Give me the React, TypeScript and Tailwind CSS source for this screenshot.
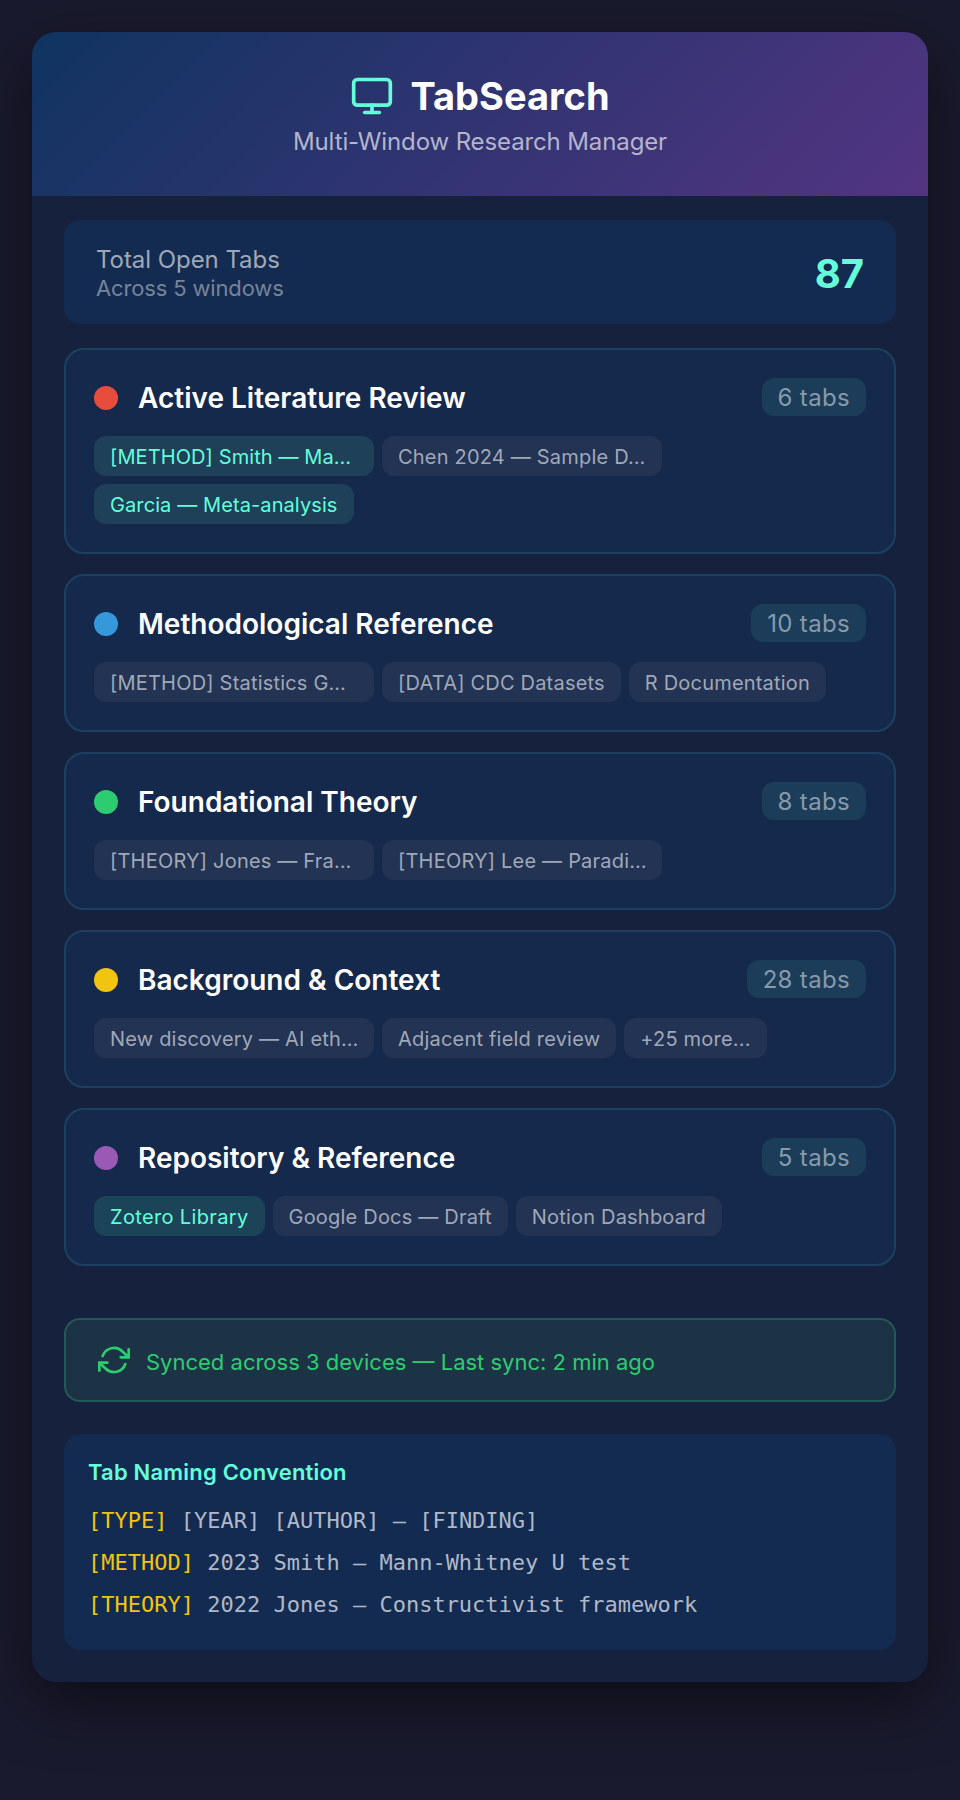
import { Monitor } from "lucide-react";

const sans = "font-['Inter','Noto_Sans',sans-serif]";

type Chip = { label: string; on?: boolean; repo?: boolean; full?: boolean };
type Group = { color: string; title: string; count: string; chips: Chip[] };

const groups: Group[] = [
  {
    color: "bg-[#e74c3c]",
    title: "Active Literature Review",
    count: "6 tabs",
    chips: [
      { label: "[METHOD] Smith — Ma…", on: true, full: true },
      { label: "Chen 2024 — Sample D…", full: true },
      { label: "Garcia — Meta-analysis", on: true },
    ],
  },
  {
    color: "bg-[#3498db]",
    title: "Methodological Reference",
    count: "10 tabs",
    chips: [
      { label: "[METHOD] Statistics G…", full: true },
      { label: "[DATA] CDC Datasets" },
      { label: "R Documentation" },
    ],
  },
  {
    color: "bg-[#2ecc71]",
    title: "Foundational Theory",
    count: "8 tabs",
    chips: [
      { label: "[THEORY] Jones — Fra…", full: true },
      { label: "[THEORY] Lee — Paradi…", full: true },
    ],
  },
  {
    color: "bg-[#f1c40f]",
    title: "Background & Context",
    count: "28 tabs",
    chips: [
      { label: "New discovery — AI eth…", full: true },
      { label: "Adjacent field review" },
      { label: "+25 more..." },
    ],
  },
  {
    color: "bg-[#9b59b6]",
    title: "Repository & Reference",
    count: "5 tabs",
    chips: [
      { label: "Zotero Library", on: true, repo: true },
      { label: "Google Docs — Draft" },
      { label: "Notion Dashboard" },
    ],
  },
];

function TabChip({ chip }: { chip: Chip }) {
  const tone = chip.repo
    ? "bg-[#1c4459] text-[#64ffda] tracking-[0.35px]"
    : chip.on
      ? "bg-[#1e4059] text-[#64ffda] tracking-[0.1px]"
      : "bg-[#233354] text-[#a0a8b8] tracking-[0.2px]";
  return (
    <div
      className={`h-10 whitespace-nowrap rounded-xl px-4 text-[20px] leading-[42px] ${chip.full ? "w-[280px]" : ""} ${tone}`}
    >
      {chip.label}
    </div>
  );
}

function SyncIcon() {
  return (
    <svg
      viewBox="0 0 24 24"
      fill="none"
      stroke="currentColor"
      strokeWidth={2}
      strokeLinecap="round"
      strokeLinejoin="round"
      className="h-8 w-8 shrink-0"
    >
      <polyline points="23 4 23 10 17 10" />
      <polyline points="1 20 1 14 7 14" />
      <path d="M3.51 9a9 9 0 0 1 14.85-3.36L23 10M1 14l4.64 4.36A9 9 0 0 0 20.49 15" />
    </svg>
  );
}

export default function App() {
  return (
    <div className={`min-h-[1800px] bg-[#1a1a2e] p-8 ${sans}`}>
      <div className="overflow-hidden rounded-3xl bg-[#16213e] shadow-[0_20px_60px_rgba(0,0,0,0.5)]">
        <header className="flex h-[164px] flex-col items-center bg-[linear-gradient(135deg,#0f3460,#533483)] pt-10">
          <div className="flex h-[48px] items-center gap-4 text-[38px] font-bold text-white">
            <Monitor className="h-11 w-11 text-[#64ffda]" strokeWidth={2} />
            <span>TabSearch</span>
          </div>
          <div className="mt-[6px] text-[24px] leading-8 tracking-[-0.12px] text-[#b4b4cc]">
            Multi-Window Research Manager
          </div>
        </header>

        <main className="flex flex-col px-8 pb-8 pt-6">
          <section className="flex h-[104px] items-center justify-between rounded-2xl bg-[#132b50] px-8 pt-[2px]">
            <div>
              <div className="text-[24px] leading-[29px] tracking-[-0.05px] text-[#a0a8b8]">Total Open Tabs</div>
              <div className="text-[22px] leading-[28px] tracking-[-0.15px] text-[#788399]">Across 5 windows</div>
            </div>
            <div className="mt-[2px] text-[40px] font-bold leading-none text-[#64ffda]">87</div>
          </section>

          <div className="mt-6 flex flex-col gap-5">
            {groups.map((g) => (
              <section
                key={g.title}
                className="rounded-[20px] border-2 border-[#1c4060] bg-[#14294c] px-7 pb-7 pt-7"
              >
                <div className="flex h-[40px] items-start justify-between">
                  <div className="flex h-10 items-center gap-5">
                    <span className={`h-6 w-6 rounded-full ${g.color}`} />
                    <span className="text-[28px] font-semibold text-white">{g.title}</span>
                  </div>
                  <span className="h-[38px] rounded-xl bg-[#1b3d5a] px-4 text-[24px] leading-[40px] tracking-[0.33px] text-[#8899aa]">
                    {g.count}
                  </span>
                </div>
                <div className="mt-[18px] flex flex-wrap gap-2">
                  {g.chips.map((c) => (
                    <TabChip key={c.label} chip={c} />
                  ))}
                </div>
              </section>
            ))}
          </div>

          <section className="mt-[52px] flex h-[84px] items-center gap-4 rounded-2xl border-2 border-[#235a55] bg-[#1c3346] px-8 text-[22px] text-[#2ecc71]">
            <SyncIcon />
            <span className="mt-1">Synced across 3 devices — Last sync: 2 min ago</span>
          </section>

          <section className="mt-8 h-[216px] rounded-2xl bg-[#132b50] px-6 pt-6">
            <div className="text-[22px] font-semibold leading-7 tracking-[0.2px] text-[#64ffda]">Tab Naming Convention</div>
            <div className="mt-[14px] font-['DejaVu_Sans_Mono',monospace] text-[22px] leading-[42px] text-[#b0b8c8]">
              <div>
                <span className="text-[#f1c40f]">[TYPE]</span> [YEAR] [AUTHOR] — [FINDING]
              </div>
              <div>
                <span className="text-[#f1c40f]">[METHOD]</span> 2023 Smith — Mann-Whitney U test
              </div>
              <div>
                <span className="text-[#f1c40f]">[THEORY]</span> 2022 Jones — Constructivist framework
              </div>
            </div>
          </section>
        </main>
      </div>
    </div>
  );
}
